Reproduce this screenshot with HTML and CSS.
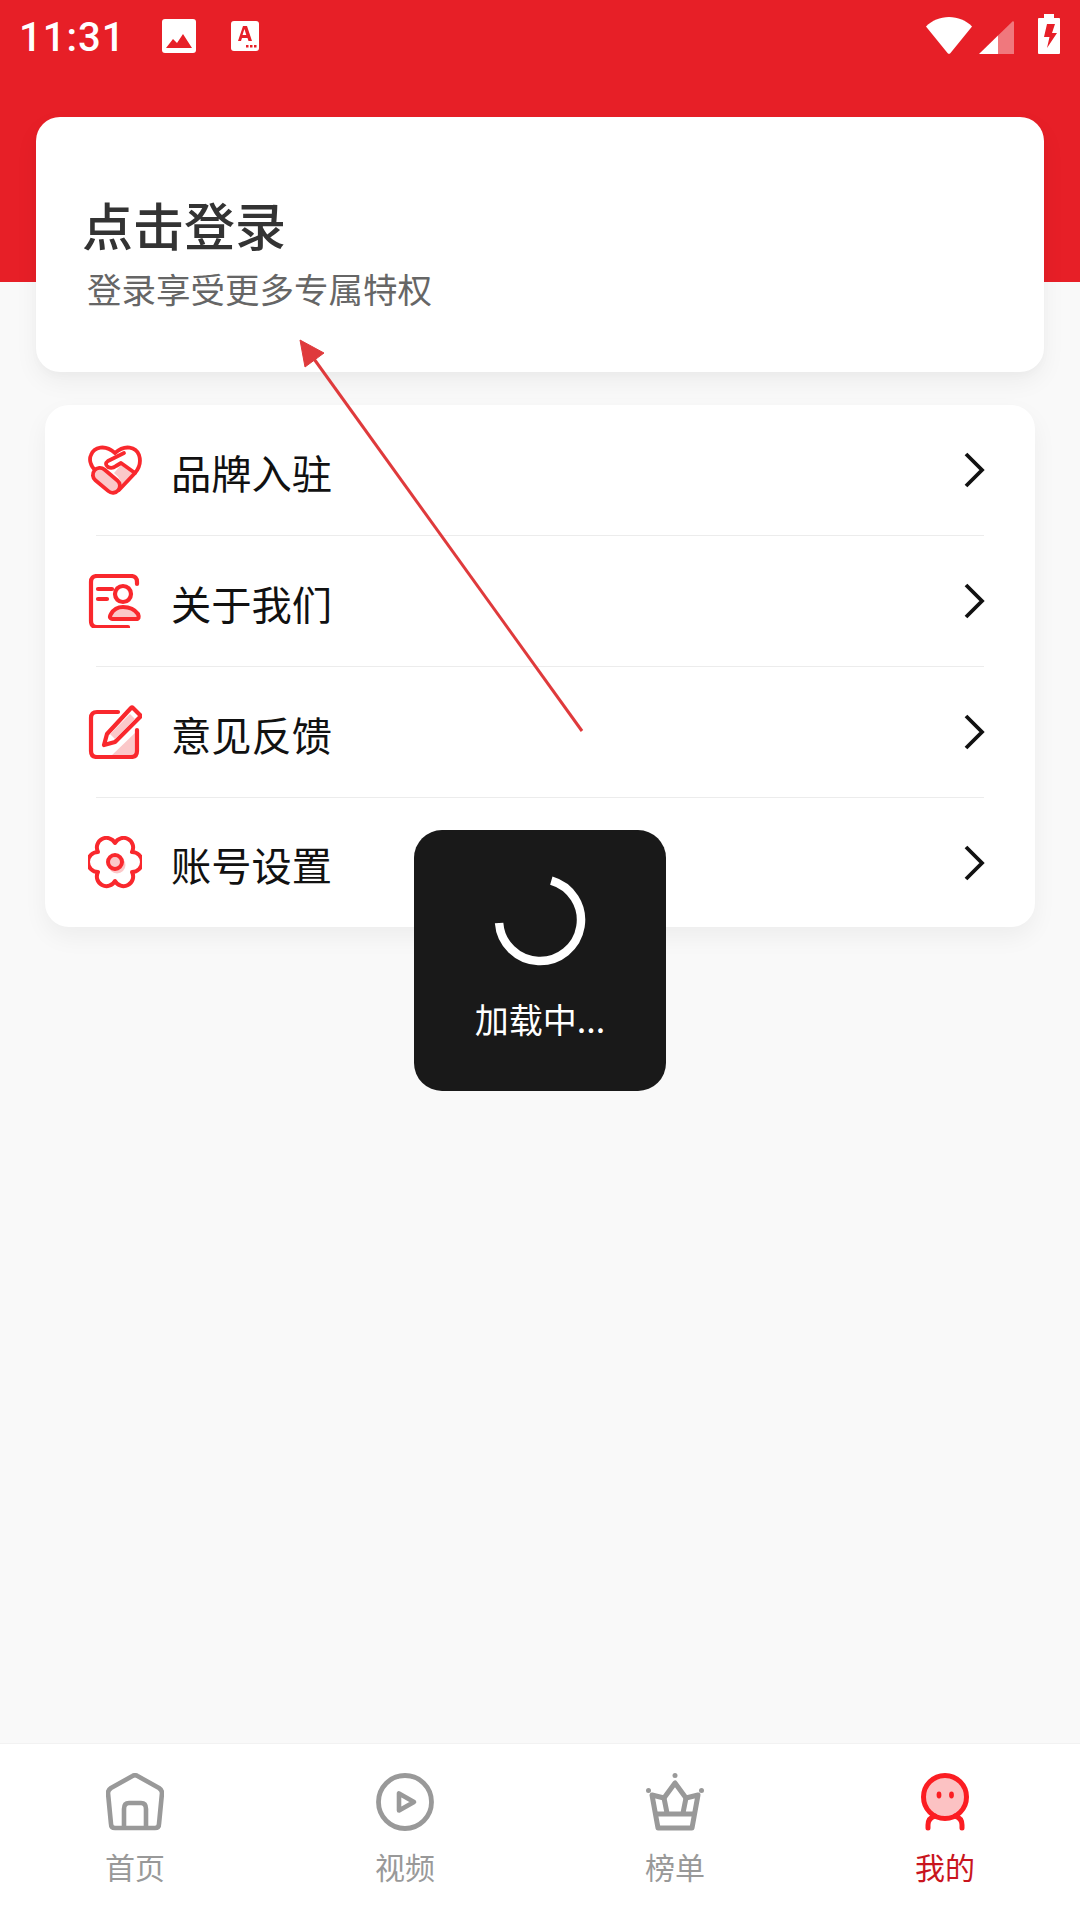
FILE: index.html
```html
<!doctype html>
<html>
<head>
<title>我的</title>
<link rel="stylesheet" href="styles.css">
</head>
<body>
<div class="page">
	<div class="top">
		<div class="statusBar">
			<span class="time">11:31</span>
			<svg class="noteImage" width="34" height="34" viewBox="0 0 34 34"><rect width="34" height="34" rx="3" fill="#fff"/><path d="M4 29l7-9 4 4 6-9 9 14z" fill="#e71f27"/></svg>
			<svg class="noteFont" width="28" height="30" viewBox="0 0 28 30"><rect width="28" height="30" rx="3" fill="#fff"/><path d="M7 20l5-15h4l5 15h-3.500l-1-3h-5.500l-1 3zM11.500 14h3.800l-1.900-6z" fill="#e71f27"/><path d="M15 24h2.500v2.500h-2.500zM19 24h2.500v2.500h-2.500zM23 24h2.500v2.500h-2.500z" fill="#e71f27"/></svg>
			<span class="spacer"></span>
			<svg class="wifi" width="46" height="37" viewBox="0 0 46 37"><path d="M0 9.500C6 3.500 14 0 23 0s17 3.500 23 9.500L24.500 36a2 2 0 0 1-3 0z" fill="#fff"/></svg>
			<svg class="signal" width="35" height="34" viewBox="0 0 35 34"><path d="M19 15.500L0 34h19z" fill="#fff"/><path d="M19 15.500L34 1l1 1v32H19z" fill="#fff" fill-opacity=".4"/></svg>
			<svg class="battery" width="22" height="40" viewBox="0 0 22 40"><path d="M6 0h10v4h5a1 1 0 0 1 1 1v34a1 1 0 0 1-1 1H1a1 1 0 0 1-1-1V5a1 1 0 0 1 1-1h5z" fill="#fff"/><path d="M9 10h8l-3 9h5L9 34l2.500-11H6z" fill="#e71f27"/></svg>
		</div>

		<div class="loginCard">
			<div class="loginTitle">点击登录</div>
			<div class="loginSub">登录享受更多专属特权</div>
		</div>
	</div>

	<div class="menu">
		<div class="menuRow">
			<svg class="menuIcon" width="54" height="54" viewBox="0 0 54 54">
				<path d="M33 22l14 9-15 15q4-8-6-16z" fill="#fbc8c9"/>
				<path d="M8 28C2 23 1 16 3 12 6 4 17 1 27 10 37 1 48 4 51 12c2 6 1 12-4 18L31 47" fill="none" stroke="#f9282d" stroke-width="3.800" stroke-linecap="round"/>
				<path d="M36 10L20 18q-4 3 0 6 4 2 8-1l5-3 14 10" fill="none" stroke="#f9282d" stroke-width="3.800" stroke-linecap="round" stroke-linejoin="round"/>
				<rect x="3" y="30" width="31" height="14" rx="7" transform="rotate(40 18 37)" fill="#fbc8c9" stroke="#f9282d" stroke-width="3.800"/>
			</svg>
			<span class="menuLabel">品牌入驻</span>
			<svg class="chevron" width="22" height="36" viewBox="0 0 22 36"><path d="M3 2l16 16L3 34" fill="none" stroke="#111" stroke-width="3.800"/></svg>
		</div>
		<div class="menuRow">
			<svg class="menuIcon" width="54" height="54" viewBox="0 0 54 54">
				<path d="M49 10V8q0-6-6-6H9Q3 2 3 8v39q0 6 6 6h31" fill="none" stroke="#f9282d" stroke-width="4.200" stroke-linecap="round"/>
				<path d="M10 15h14M10 25h9" stroke="#f9282d" stroke-width="4.200" stroke-linecap="round"/>
				<circle cx="35" cy="20" r="8" fill="none" stroke="#f9282d" stroke-width="4.200"/>
				<path d="M26 45q-6 0-3-5 4-7 12-7 10 0 15 7 2 5-2 5z" fill="#fbc8c9" stroke="#f9282d" stroke-width="4.200" stroke-linejoin="round"/>
			</svg>
			<span class="menuLabel">关于我们</span>
			<svg class="chevron" width="22" height="36" viewBox="0 0 22 36"><path d="M3 2l16 16L3 34" fill="none" stroke="#111" stroke-width="3.800"/></svg>
		</div>
		<div class="menuRow">
			<svg class="menuIcon" width="54" height="54" viewBox="0 0 54 54">
				<path d="M49 26v20q0 6-6 6H22z" fill="#fbc8c9"/>
				<path d="M30 7H9q-6 0-6 6v33q0 6 6 6h34q6 0 6-6V25" fill="none" stroke="#f9282d" stroke-width="4.200" stroke-linecap="round"/>
				<path d="M45 3l7 7q1 1 0 2L27 37l-11 3 3-11L43 3q1-1 2 0z" fill="#fff" stroke="#f9282d" stroke-width="4.200" stroke-linejoin="round"/>
				<path d="M42 9l5 5-20 20-5-5z" fill="#fbc8c9"/>
			</svg>
			<span class="menuLabel">意见反馈</span>
			<svg class="chevron" width="22" height="36" viewBox="0 0 22 36"><path d="M3 2l16 16L3 34" fill="none" stroke="#111" stroke-width="3.800"/></svg>
		</div>
		<div class="menuRow">
			<svg class="menuIcon" width="54" height="54" viewBox="0 0 54 54">
				<path d="M44 16A8 8 0 0 1 44 36A9 9 0 0 1 27 45A9 9 0 0 1 10 36A8 8 0 0 1 10 16A9 9 0 0 1 27 7A9 9 0 0 1 44 16z" fill="none" stroke="#f9282d" stroke-width="4" stroke-linejoin="round"/>
				<circle cx="29" cy="29" r="8.500" fill="#fbc8c9"/>
				<circle cx="27" cy="26" r="7" fill="none" stroke="#f9282d" stroke-width="4"/>
			</svg>
			<span class="menuLabel">账号设置</span>
			<svg class="chevron" width="22" height="36" viewBox="0 0 22 36"><path d="M3 2l16 16L3 34" fill="none" stroke="#111" stroke-width="3.800"/></svg>
		</div>
	</div>

	<div class="tabBar">
		<div class="tab">
			<svg width="58" height="58" viewBox="0 0 58 58"><path d="M26.500 3L5 15q-3 2-3 5l3 31q0 4 4 4h40q4 0 4-4l3-31q0-3-3-5L31.500 3q-2.500-1.500-5 0z" fill="none" stroke="#999" stroke-width="4.600" stroke-linejoin="round"/><path d="M18 55V36q0-6 5-6h12q5 0 5 6v19" fill="none" stroke="#999" stroke-width="4.600"/></svg>
			<span>首页</span>
		</div>
		<div class="tab">
			<svg width="58" height="58" viewBox="0 0 58 58"><circle cx="29" cy="29" r="26.500" fill="none" stroke="#999" stroke-width="4.800"/><path d="M23 20.500v17l15-8.500z" fill="none" stroke="#999" stroke-width="4.600" stroke-linejoin="round"/></svg>
			<span>视频</span>
		</div>
		<div class="tab">
			<svg width="58" height="58" viewBox="0 0 58 58"><circle cx="29" cy="2.500" r="2.500" fill="#999"/><circle cx="2.500" cy="17.500" r="2.500" fill="#999"/><circle cx="55.500" cy="17.500" r="2.500" fill="#999"/><path d="M29 10L18 25 6 22l6 33h34l6-33-12 3z" fill="none" stroke="#999" stroke-width="5" stroke-linejoin="round"/><path d="M18 25l3 15M40 25l-3 15M9 41h40" fill="none" stroke="#999" stroke-width="5"/></svg>
			<span>榜单</span>
		</div>
		<div class="tab active">
			<svg width="58" height="58" viewBox="0 0 58 58"><circle cx="29" cy="25" r="21" fill="#fcc2c3"/><circle cx="29" cy="24" r="21.500" fill="none" stroke="#fb1d22" stroke-width="5"/><ellipse cx="23" cy="22" rx="2.400" ry="3.400" fill="#fb1d22"/><ellipse cx="35.500" cy="22" rx="2.400" ry="3.400" fill="#fb1d22"/><path d="M12 55v-3q0-7 7-9M46 55v-3q0-7-7-9" fill="none" stroke="#fb1d22" stroke-width="5" stroke-linecap="round"/></svg>
			<span>我的</span>
		</div>
	</div>

	<svg class="arrow" width="1080" height="1920" viewBox="0 0 1080 1920">
		<path d="M582 731L309 352" stroke="#df3a3c" stroke-width="3"/>
		<path d="M300 340l24 13-19 14z" fill="#df3a3c" stroke="#df3a3c" stroke-linejoin="round"/>
	</svg>

	<div class="toast">
		<svg class="spinner" width="100" height="100" viewBox="0 0 100 100"><path d="M61.300 10.600A41 41 0 1 1 9.100 53" fill="none" stroke="#fff" stroke-width="8.500"/></svg>
		<span class="toastText">加载中...</span>
	</div>
</div>
</body>
</html>
```

FILE: styles.css
```css
* {
	box-sizing: border-box;
}
html, body {
	margin: 0;
	padding: 0;
}
body {
	font-family: "Noto Sans CJK SC", "Noto Sans", sans-serif;
}
.page {
	position: relative;
	width: 1080px;
	height: 1920px;
	overflow: hidden;
	display: flex;
	flex-direction: column;
	background-color: #f9f9f9;
}
.top {
	background: linear-gradient(#e71f27 282px, transparent 282px);
	padding-bottom: 33px;
}
.statusBar {
	display: flex;
	align-items: center;
	height: 117px;
	padding: 0 20px 47px 19px;
}
.time {
	font-family: Roboto, sans-serif;
	font-size: 40px;
	font-weight: 500;
	letter-spacing: 1px;
	color: #fff;
	width: 143px;
	margin-top: 4px;
}
.noteImage {
	margin-right: 35px;
	margin-top: 2px;
}
.noteFont {
	margin-top: 2px;
}
.spacer {
	flex-grow: 1;
}
.wifi {
	margin-right: 7px;
}
.signal {
	margin-right: 24px;
	margin-top: 3px;
}
.battery {
	margin-top: -2px;
}
.loginCard {
	margin: 0 36px;
	height: 255px;
	padding: 72px 0 0 46px;
	background-color: #fff;
	border-radius: 24px;
	box-shadow: 0 4px 8px rgba(0, 0, 0, .02), 0 10px 24px rgba(0, 0, 0, .05);
}
.loginTitle {
	font-size: 51px;
	font-weight: 500;
	line-height: 70px;
	color: #333;
}
.loginSub {
	font-size: 34.500px;
	line-height: 48px;
	margin-left: 5px;
	margin-top: 5px;
	color: #666;
}
.menu {
	margin: 0 45px;
	height: 522px;
	padding: 0 51px;
	background-color: #fff;
	border-radius: 24px;
	box-shadow: 0 10px 24px rgba(0, 0, 0, .05);
}
.menuRow {
	display: flex;
	align-items: center;
	height: 131px;
	border-bottom: 1px solid #ececec;
}
.menuRow:last-child {
	height: 129px;
	border-bottom: none;
}
.menuIcon {
	margin-left: -8px;
	margin-right: 29px;
}
.menuLabel {
	flex-grow: 1;
	font-size: 40.250px;
	padding-top: 2px;
	color: #111;
}
.chevron {
	margin-right: -1px;
}
.tabBar {
	display: flex;
	margin-top: auto;
	height: 177px;
	padding-top: 29px;
	background-color: #fff;
	border-top: 1px solid #f2f2f2;
}
.tab {
	width: 270px;
	display: flex;
	flex-direction: column;
	align-items: center;
	font-size: 30px;
	line-height: 40px;
	color: #999;
}
.tab svg {
	margin-bottom: 15px;
}
.tab.active {
	color: #c9151e;
}
.arrow {
	position: absolute;
	left: 0;
	top: 0;
	pointer-events: none;
}
.toast {
	position: absolute;
	left: 414px;
	top: 830px;
	width: 252px;
	height: 261px;
	display: flex;
	flex-direction: column;
	align-items: center;
	padding-top: 40px;
	background-color: #191919;
	border-radius: 28px;
}
.spinner {
	margin-bottom: 25px;
}
.toastText {
	font-size: 34px;
	line-height: 48px;
	color: #fff;
}
```
